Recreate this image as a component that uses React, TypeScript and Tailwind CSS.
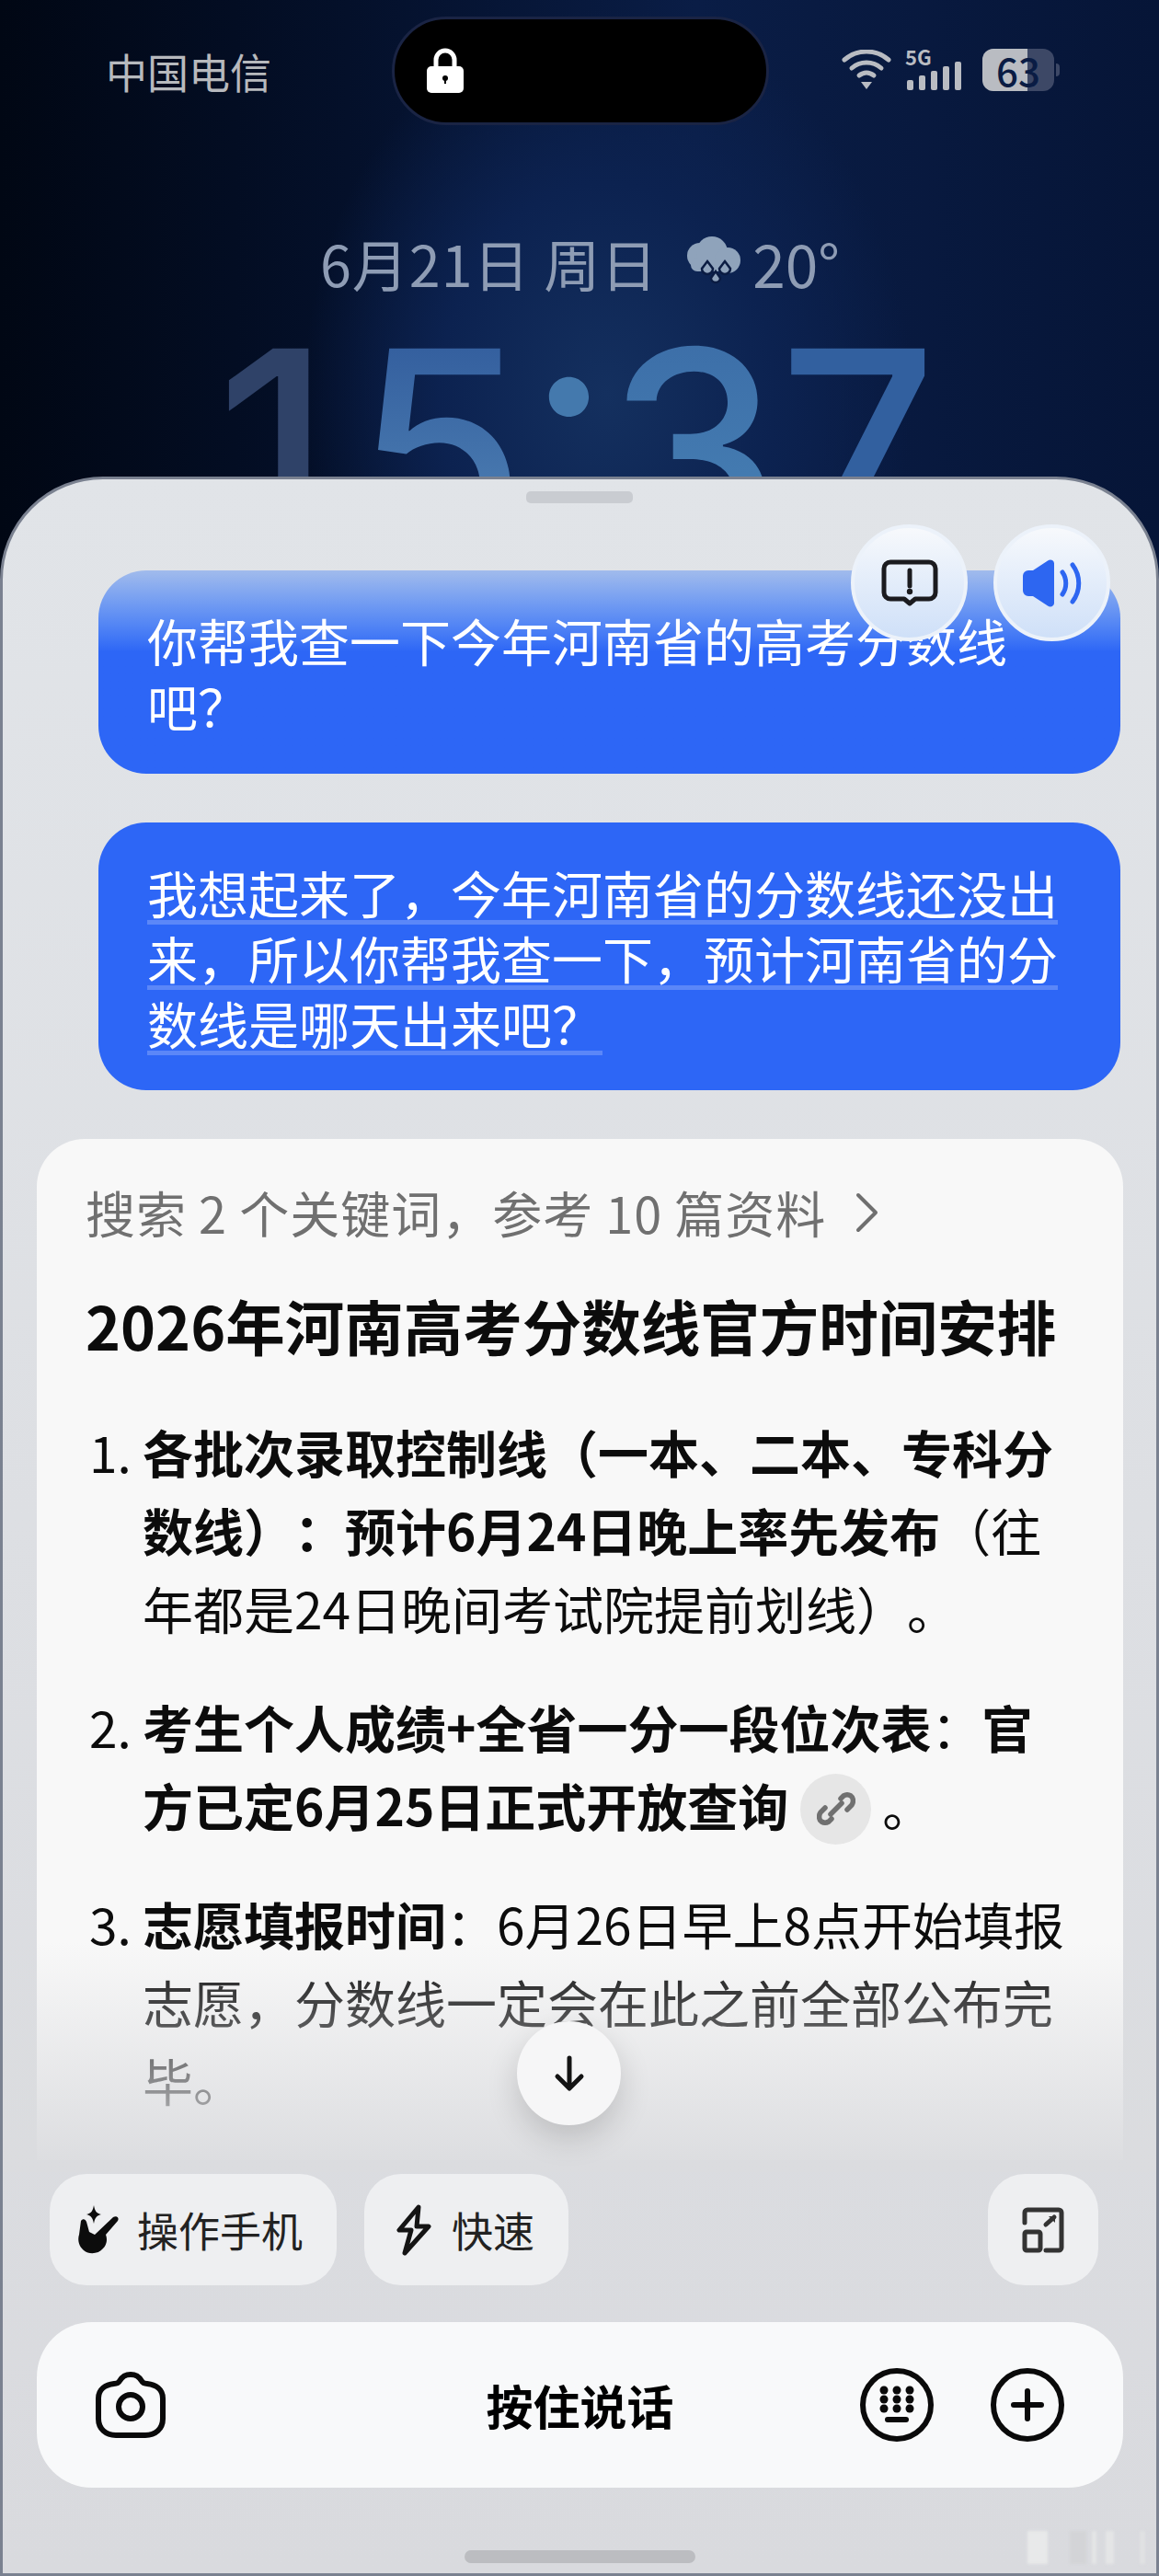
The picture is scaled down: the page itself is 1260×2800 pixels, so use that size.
const cjk = "font-['Noto_Sans_CJK_SC','Noto_Sans',sans-serif] [text-spacing-trim:space-all]";

const LockIcon = () => (
  <svg width="42" height="50" viewBox="0 0 42 50">
    <path d="M11 22V13a10 10 0 0 1 20 0v9" fill="none" stroke="#fff" strokeWidth="5" />
    <rect x="1" y="20" width="40" height="29" rx="5" fill="#fff" />
    <circle cx="21" cy="33" r="3" fill="#000" />
    <rect x="20" y="33" width="2" height="6" fill="#000" />
  </svg>
);

const WifiIcon = () => (
  <svg width="54" height="44" viewBox="0 0 54 44" fill="none" stroke="#b9bcc2" strokeWidth="5" strokeLinecap="round">
    <path d="M3 11C17 -1 37 -1 51 11" />
    <path d="M11 20C20 12 34 12 43 20" />
    <path d="M19 28C24 24 30 24 35 28" />
    <path d="M21 35h12l-6 8z" fill="#b9bcc2" stroke="none" />
  </svg>
);

const SignalBars = () => (
  <div className="relative h-[44px] w-[60px]">
    <span className="absolute left-0 top-[-4px] text-[22px] leading-[22px] font-bold text-[#b9bcc2]">5G</span>
    <div className="absolute bottom-0 left-[2px] flex items-end gap-[6px]">
      <span className="h-[11px] w-[7px] rounded-[2px] bg-[#b9bcc2]" />
      <span className="h-[16px] w-[7px] rounded-[2px] bg-[#b9bcc2]" />
      <span className="h-[21px] w-[7px] rounded-[2px] bg-[#b9bcc2]" />
      <span className="h-[26px] w-[7px] rounded-[2px] bg-[#b9bcc2]" />
      <span className="h-[31px] w-[7px] rounded-[2px] bg-[#b9bcc2]" />
    </div>
  </div>
);

const Battery = () => (
  <div className="flex items-center gap-[2px]">
    <div className="relative h-[46px] w-[78px] overflow-hidden rounded-[12px] bg-[#3d4866]">
      <div className="h-full w-[49px] bg-[#b9bcc2]" />
      <span className="absolute inset-0 flex items-center justify-center text-[42px] font-medium leading-none text-[#0a1c44]">63</span>
    </div>
    <span className="h-[14px] w-[4px] rounded-r-full bg-[#3d4866]" />
  </div>
);

const RainCloud = () => (
  <svg width="60" height="56" viewBox="0 0 60 56" fill="#8fa3bb">
    <circle cx="14" cy="21" r="14" />
    <circle cx="27" cy="17" r="17" />
    <circle cx="44" cy="26" r="14" />
    <rect x="4" y="24" width="50" height="14" rx="7" />
    <path d="M22 27l6 8a6 6 0 1 1-12 0z" stroke="#0b1c42" strokeWidth="2.500" />
    <path d="M41 27l6 8a6 6 0 1 1-12 0z" stroke="#0b1c42" strokeWidth="2.500" />
    <path d="M31 38l5 7a5 5 0 1 1-10 0z" stroke="#0b1c42" strokeWidth="2.500" />
  </svg>
);

const FeedbackIcon = () => (
  <svg width="62" height="52" viewBox="0 0 62 52" fill="none">
    <path d="M10 3h42a7 7 0 0 1 7 7v26a7 7 0 0 1-7 7H37l-6 5-6-5H10a7 7 0 0 1-7-7V10a7 7 0 0 1 7-7z" stroke="#1b1b1f" strokeWidth="5" strokeLinejoin="round" />
    <path d="M31 12v17" stroke="#1b1b1f" strokeWidth="5" strokeLinecap="round" />
    <circle cx="31" cy="35" r="3.200" fill="#1b1b1f" />
  </svg>
);

const SpeakerIcon = () => (
  <svg width="66" height="54" viewBox="0 0 66 54" fill="#2d66f1">
    <path d="M12 13 L28 2.500c3-2 7-.5 7 3v43c0 3.500-4 5-7 3L12 41H7a6 6 0 0 1-6-6V19a6 6 0 0 1 6-6z" />
    <path d="M44 15c5 7 5 17 0 24" fill="none" stroke="#2d66f1" strokeWidth="5" strokeLinecap="round" />
    <path d="M55 7c9 12 9 28 0 40" fill="none" stroke="#2d66f1" strokeWidth="5" strokeLinecap="round" />
  </svg>
);

const LinkIcon = () => (
  <svg width="42" height="42" viewBox="0 0 42 42" fill="none" stroke="#707070" strokeWidth="5.500" strokeLinecap="round">
    <path d="M26 10l3-3a8 8 0 0 1 8 0c3 2 3 7 1 10l-5 5" />
    <path d="M16 32l-3 3a8 8 0 0 1-8 0c-3-2-3-7-1-10l5-5" />
    <path d="M15 27l12-12" />
  </svg>
);

const TapIcon = () => (
  <svg width="46" height="54" viewBox="0 0 46 54">
    <path d="M18 0c1 6 3 9 8 10-5 1-7 4-8 10-1-6-3-9-8-10 5-1 7-4 8-10z" fill="#0c0c0c" />
    <path d="M4 17c2-3 5-2 6 1l3 11 6 3 20-19c4-2 7 1 5 4L31 32c2 5 1 11-3 15-5 6-15 7-21 2-5-4-7-11-5-17z" fill="#0c0c0c" />
  </svg>
);

const BoltIcon = () => (
  <svg width="38" height="56" viewBox="0 0 38 56" fill="none" stroke="#141414" strokeWidth="5" strokeLinejoin="round" strokeLinecap="round">
    <path d="M24 3L3 28h13L9 53l26-29H22z" />
  </svg>
);

const ExpandIcon = () => (
  <svg width="46" height="50" viewBox="0 0 46 50" fill="none" stroke="#333" strokeWidth="5" strokeLinecap="round" strokeLinejoin="round">
    <path d="M3 17V6a3 3 0 0 1 3-3h34a3 3 0 0 1 3 3v38a3 3 0 0 1-3 3H26" />
    <rect x="3" y="27" width="17" height="20" rx="2" />
    <path d="M26 19l9-8" />
    <path d="M29 10h7v7z" fill="#333" stroke="none" />
  </svg>
);

const CameraIcon = () => (
  <svg width="76" height="72" viewBox="0 0 76 72" fill="none" stroke="#0a0a0a" strokeWidth="6">
    <path d="M26 10c3-5 6-7 12-7s9 2 12 7c1 2 3 3 6 3 9 1 17 6 17 16v22c0 11-8 18-19 18H22C11 69 3 62 3 51V29c0-10 8-15 17-16 3 0 5-1 6-3z" strokeLinejoin="round" />
    <circle cx="38" cy="38" r="13" />
  </svg>
);

const KeyboardIcon = () => (
  <svg width="80" height="80" viewBox="0 0 80 80" fill="none">
    <circle cx="40" cy="40" r="37" stroke="#0a0a0a" strokeWidth="6" />
    {[24, 34, 44].map((y) =>
      [26, 40, 54].map((x) => <circle key={`${x}-${y}`} cx={x} cy={y} r="4.500" fill="#0a0a0a" />)
    )}
    <path d="M30 56h20" stroke="#0a0a0a" strokeWidth="6" strokeLinecap="round" />
  </svg>
);

const PlusIcon = () => (
  <svg width="80" height="80" viewBox="0 0 80 80" fill="none" stroke="#0a0a0a" strokeWidth="6" strokeLinecap="round">
    <circle cx="40" cy="40" r="37" />
    <path d="M40 25v30M25 40h30" />
  </svg>
);

const ArrowDownIcon = () => (
  <svg width="36" height="40" viewBox="0 0 36 40" fill="none" stroke="#141414" strokeWidth="5" strokeLinecap="round" strokeLinejoin="round">
    <path d="M18 3v32M5 23l13 13 13-13" />
  </svg>
);

const ChevronIcon = () => (
  <svg width="28" height="44" viewBox="0 0 28 44" fill="none" stroke="#6f6f6f" strokeWidth="4" strokeLinecap="round" strokeLinejoin="round">
    <path d="M5 3l19 19L5 41" />
  </svg>
);

const LockScreen = () => (
  <div className="h-[518px] overflow-hidden">
    {/* Status bar */}
    <div className="flex h-[245px] items-start pt-[18px]">
      <p className="w-[426px] pl-[115px] pt-[30px] text-[45px] leading-[60px] text-[#b7b9bd]">中国电信</p>
      <div className="flex h-[118px] w-[410px] items-center rounded-[59px] border-[3px] border-[#1a2444] bg-black pl-[34px]">
        <LockIcon />
      </div>
      <div className="flex items-center pl-[79px] pt-[35px]">
        <WifiIcon />
        <div className="ml-[15px] mr-[24px]">
          <SignalBars />
        </div>
        <Battery />
      </div>
    </div>
    {/* Date and weather */}
    <div className="flex h-[80px] items-center pl-[348px] text-[#8e9cb4]">
      <span className="text-[61px] leading-none tracking-[1px]">6月21日 周日</span>
      <span className="ml-[32px]">
        <RainCloud />
      </span>
      <span className="ml-[11px] text-[64px] leading-none">20°</span>
    </div>
    {/* Clock, cut off by the sheet */}
    <p className="mt-[13px] pl-[235px] font-['Inter',sans-serif] text-[300px] font-medium leading-[300px] tracking-[8px] whitespace-nowrap">
      <span className="mr-[18px] text-[#2f4268]">1</span>
      <span className="bg-gradient-to-b from-[#2c5497] to-[#5a8fbd] bg-clip-text text-transparent">5</span>
      <span className="relative top-[-31px] ml-[-6px] mr-[-12px] text-[#4479ad]">:</span>
      <span className="mr-[-9px] bg-gradient-to-b from-[#3a6aa5] to-[#4a86b8] bg-clip-text text-transparent">3</span>
      <span className="text-[#32609f]">7</span>
    </p>
  </div>
);

const Bubbles = () => (
  <div className="relative flex flex-col gap-[53px] pl-[104px] pr-[39px] pt-[99px]">
    <div className="h-[221px] rounded-[52px] bg-gradient-to-b from-[#a1bbec] to-[#2d66f6] to-[40%] pl-[53px] pr-[60px] pt-[40px] text-[55px] leading-[71px] text-white">
      你帮我查一下今年河南省的高考分数线吧？
    </div>
    <div className="h-[291px] rounded-[52px] bg-[#2d66f6] pl-[53px] pr-[40px] pt-[40px] text-[55px] leading-[71px] text-white">
      <span className="underline decoration-[#5b87f8] decoration-[5px] underline-offset-[7px]">
        我想起来了，今年河南省的分数线还没出来，所以你帮我查一下，预计河南省的分数线是哪天出来吧？
      </span>
    </div>
    {/* Floating actions over the first bubble */}
    <div className="absolute right-[50px] top-[49px] flex gap-[28px]">
      <button className="flex h-[127px] w-[127px] items-center justify-center rounded-full border-[4px] border-[#ecf2fa] bg-gradient-to-b from-[#f7f9fc] to-[#cfe0f8]">
        <FeedbackIcon />
      </button>
      <button className="flex h-[127px] w-[127px] items-center justify-center rounded-full border-[4px] border-[#ecf2fa] bg-gradient-to-b from-[#f7f9fc] to-[#cfe0f8]">
        <SpeakerIcon />
      </button>
    </div>
  </div>
);

const AnswerCard = () => (
  <div className="ml-[37px] mr-[36px] mt-[53px] h-[1110px] rounded-t-[52px] bg-[#f8f8f8] pl-[53px] pr-[56px] pt-[44px] text-[#0c0c0c]">
    <div className="flex items-center gap-[30px] text-[#707070]">
      <span className="whitespace-nowrap text-[54px] leading-[72px] tracking-[1px]">搜索 2 个关键词，参考 10 篇资料</span>
      <ChevronIcon />
    </div>
    <h1 className="mt-[41px] whitespace-nowrap text-[64.500px] font-bold leading-[90px]">2026年河南高考分数线官方时间安排</h1>
    <ol className="mt-[50px] flex flex-col gap-[44px] pl-[4px] text-[55px] leading-[85px]">
      <li className="flex">
        <span className="w-[58px] shrink-0">1.</span>
        <p>
          <b className="font-bold">各批次录取控制线（一本、二本、专科分数线）：预计6月24日晚上率先发布</b>
          （往年都是24日晚间考试院提前划线）。
        </p>
      </li>
      <li className="flex">
        <span className="w-[58px] shrink-0">2.</span>
        <p>
          <b className="font-bold">考生个人成绩+全省一分一段位次表</b>：<b className="font-bold">官方已定6月25日正式开放查询</b>
          <span className="ml-[13px] mr-[12px] inline-flex h-[77px] w-[77px] translate-y-[2px] items-center justify-center rounded-full bg-[#e6e6e6]">
            <LinkIcon />
          </span>
          。
        </p>
      </li>
      <li className="flex">
        <span className="w-[58px] shrink-0">3.</span>
        <p>
          <b className="font-bold">志愿填报时间</b>：6月26日早上8点开始填报志愿，分数线一定会在此之前全部公布完毕。
        </p>
      </li>
    </ol>
  </div>
);

const Composer = () => (
  <div className="flex flex-col">
    <div className="flex h-[121px] items-stretch pl-[51px] pr-[63px]">
      <button className="flex w-[312px] items-center gap-[19px] rounded-[40px] bg-[#eeeff1] pl-[30px] text-[45px] text-[#222]">
        <TapIcon />
        <span>操作手机</span>
      </button>
      <button className="ml-[30px] flex w-[222px] items-center gap-[22px] rounded-[40px] bg-[#eeeff1] pl-[35px] text-[45px] text-[#222]">
        <BoltIcon />
        <span>快速</span>
      </button>
      <button className="ml-auto flex w-[120px] items-center justify-center rounded-[40px] bg-[#eeeff1]">
        <ExpandIcon />
      </button>
    </div>
    <div className="ml-[37px] mr-[36px] mt-[40px] grid h-[180px] grid-cols-[1fr_auto_1fr] items-center rounded-[60px] bg-[#f8f9fa] pl-[64px] pr-[64px]">
      <CameraIcon />
      <span className="text-center text-[51px] font-bold text-black">按住说话</span>
      <div className="flex justify-end gap-[62px]">
        <KeyboardIcon />
        <PlusIcon />
      </div>
    </div>
    <div className="flex h-[93px] items-start justify-center pt-[68px]">
      <span className="h-[14px] w-[251px] rounded-full bg-[#bcbdc1]" />
    </div>
  </div>
);

export default function App() {
  return (
    <div className={`relative h-[2800px] w-[1260px] overflow-hidden bg-[radial-gradient(ellipse_330px_420px_at_660px_430px,#14305f_0%,#0c2250_55%,transparent_100%),linear-gradient(90deg,#010714_0%,#04102a_30%,#0a1d46_60%,#061537_100%)] ${cjk}`}>
      <LockScreen />
      <div className="relative h-[2282px] overflow-hidden rounded-t-[112px] border-[3px] border-[#7a8190] bg-gradient-to-b from-[#e1e4e8] to-[#d9dade]">
        {/* Handle */}
        <div className="absolute left-[569px] top-[13px] h-[13px] w-[116px] rounded-[5px] bg-[#c9ccd1]" />
        <Bubbles />
        <AnswerCard />
        {/* Fade over the end of the answer */}
        <div className="absolute inset-x-0 top-[1590px] h-[250px] bg-gradient-to-b from-transparent to-[#dbdcdf]" />
        <div className="absolute left-[559px] top-[1676px] flex h-[113px] w-[113px] items-center justify-center rounded-full bg-[#f6f6f7] shadow-[0_14px_34px_rgba(0,0,0,0.16)]">
          <ArrowDownIcon />
        </div>
        <div className="absolute inset-x-0 bottom-0">
          <Composer />
        </div>
        {/* Faint smudges at the bottom right */}
        <div className="absolute bottom-[10px] right-[12px] flex h-[36px] items-end blur-[1.500px]">
          <span className="h-full w-[22px] bg-[#e8e9ea]" />
          <span className="ml-[24px] h-full w-[18px] bg-[#d3d4d7]" />
          <span className="ml-[6px] h-full w-[5px] bg-[#e4e5e6]" />
          <span className="ml-[10px] h-full w-[9px] bg-[#e4e5e6]" />
          <span className="ml-[28px] h-full w-[6px] bg-[#e0e1e3]" />
        </div>
      </div>
    </div>
  );
}
